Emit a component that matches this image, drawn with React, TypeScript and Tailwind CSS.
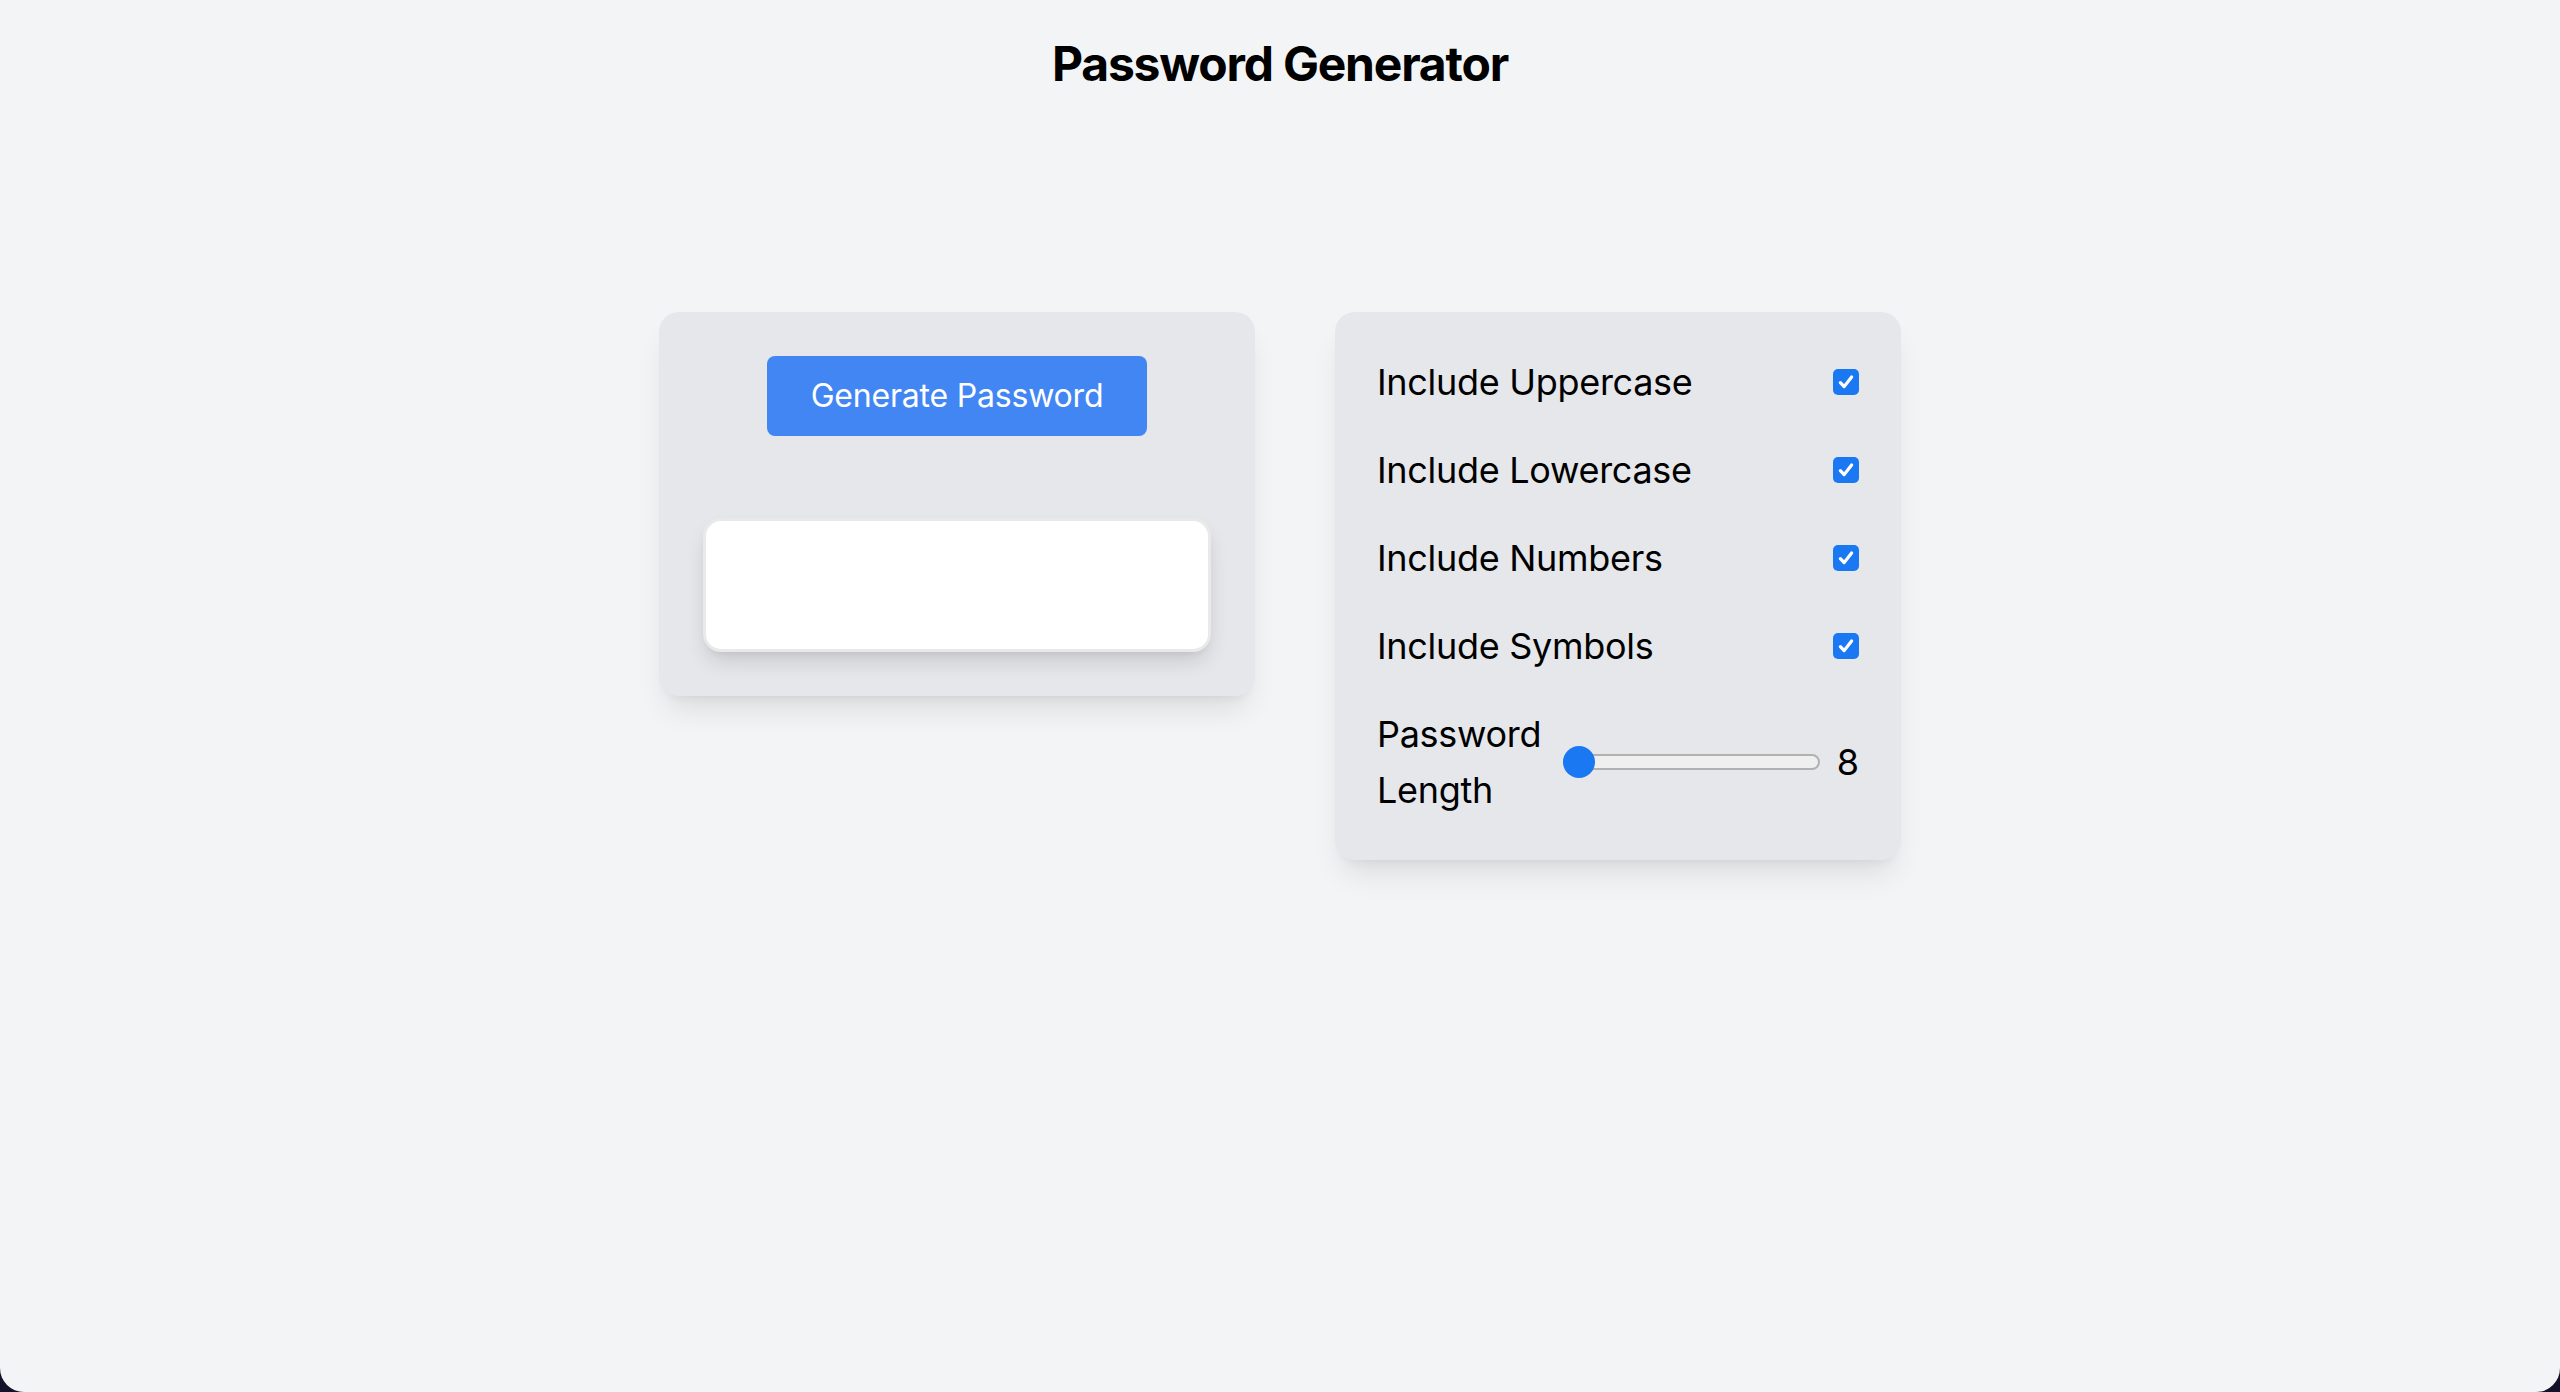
const options = ["Include Uppercase", "Include Lowercase", "Include Numbers", "Include Symbols"];

function Check() {
  return (
    <div className="size-[26px] rounded-[5px] bg-[#1a78f2] flex items-center justify-center">
      <svg viewBox="0 0 16 16" className="size-[20px]" fill="none" stroke="white" strokeWidth={2.6} strokeLinecap="round" strokeLinejoin="round">
        <path d="M3.5 8.5l3 3.2L12.5 4" />
      </svg>
    </div>
  );
}

export default function App() {
  return (
    <div className="bg-[#14122a] min-h-[1392px] font-['Inter',sans-serif] text-black">
      <div className="bg-[#f3f4f6] min-h-[1392px] rounded-b-[24px] flex flex-col items-center pt-[32px]">
        <h1 className="text-[48px] leading-[64px] font-bold tracking-[-1.2px]">Password Generator</h1>

        <div className="flex items-start gap-[80px] mt-[216px]">
          {/* generate card */}
          <div className="w-[596px] bg-[#e5e7eb] rounded-[20px] p-[44px] flex flex-col items-center shadow-[0_20px_30px_-8px_rgba(0,0,0,0.1),0_8px_12px_-8px_rgba(0,0,0,0.08)]">
            <button className="w-[380px] h-[80px] bg-[#4286f4] rounded-[8px] text-white text-[32px] leading-[48px] tracking-[-0.2px]">
              Generate Password
            </button>
            <div className="mt-[82px] w-full h-[134px] bg-white rounded-[18px] border-[3px] border-[#e9e9e9] shadow-[0_12px_22px_-4px_rgba(0,0,0,0.14),0_4px_8px_-4px_rgba(0,0,0,0.08)]" />
          </div>

          {/* options card */}
          <div className="w-[566px] bg-[#e5e7eb] rounded-[20px] p-[42px] flex flex-col gap-[32px] shadow-[0_20px_30px_-8px_rgba(0,0,0,0.1),0_8px_12px_-8px_rgba(0,0,0,0.08)]">
            {options.map((o) => (
              <div key={o} className="h-[56px] flex items-center justify-between">
                <span className="text-[36px] leading-[56px] tracking-[-0.3px]">{o}</span>
                <Check />
              </div>
            ))}
            <div className="flex items-center">
              <span className="w-[171px] min-w-0 shrink-0 text-[36px] leading-[56px] tracking-[-0.3px]">Password Length</span>
              <div className="relative shrink-0 ml-[15px] w-[257px] h-[32px] flex items-center">
                <div className="w-full h-[16px] rounded-full bg-[#efefef] border-[2px] border-[#b1b1b1]" />
                <div className="absolute left-0 top-0 size-[32px] rounded-full bg-[#1a78f2]" />
              </div>
              <span className="ml-auto text-[36px] leading-[56px]">8</span>
            </div>
          </div>
        </div>
      </div>
    </div>
  );
}
